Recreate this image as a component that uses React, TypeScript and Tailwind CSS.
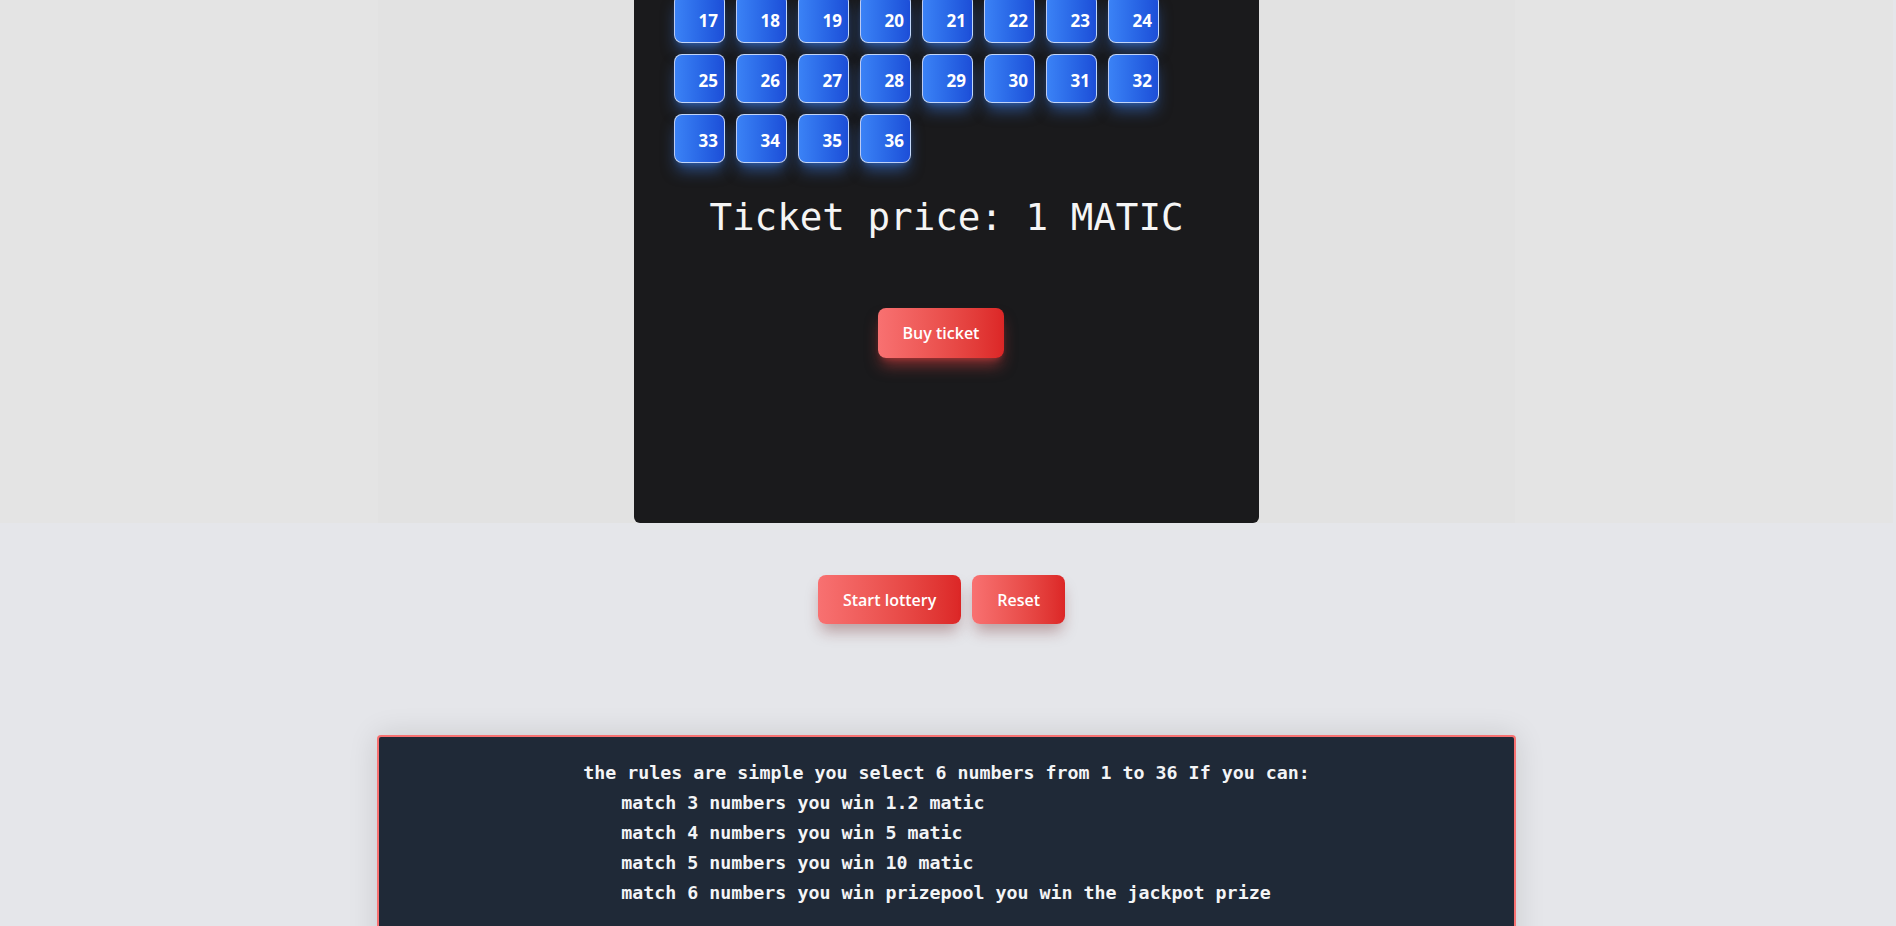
import React from "react";

const nums = Array.from({ length: 20 }, (_, i) => i + 17);

const rules = [
  "match 3 numbers you win 1.2 matic",
  "match 4 numbers you win 5 matic",
  "match 5 numbers you win 10 matic",
  "match 6 numbers you win prizepool you win the jackpot prize",
];

export default function App() {
  return (
    <div className="min-h-screen bg-[#e5e6ea] pb-[200px] pr-[3px] font-['Open_Sans',sans-serif]">
      <section className="flex justify-center bg-[#e4e4e4]">
        <div className="flex w-[1137px] justify-center bg-[#e2e2e2]">
          <div className="w-[625px] rounded-b-md bg-[#1a1a1c] pb-[165px] pl-[40px]">
            <div className="-mt-[6px] grid w-[485px] grid-cols-8 gap-[11px]">
              {nums.map((n) => (
                <button
                  key={n}
                  className="flex h-[49px] w-[51px] items-center justify-end rounded-lg border border-white/70 bg-gradient-to-r from-[#3b82f6] to-[#1d4ed8] pr-[6px] pt-[4px] text-[17px] font-bold text-white shadow-[0_10px_15px_-3px_rgba(59,130,246,0.5),0_4px_6px_-4px_rgba(59,130,246,0.5)]"
                >
                  {n}
                </button>
              ))}
            </div>
            <div className="-ml-[40px] mt-[35px] text-center font-['DejaVu_Sans_Mono',monospace] text-[37.5px] leading-[38px] text-[#f5f5f5]">
              Ticket price: 1 MATIC
            </div>
            <div className="-ml-[40px] mr-[11px] mt-[72px] flex justify-center">
              <button className="h-[50px] rounded-lg bg-gradient-to-r from-[#f87171] to-[#dc2626] px-[25px] text-[16px] font-semibold text-white shadow-[0_10px_15px_-3px_rgba(239,68,68,0.5),0_4px_6px_-4px_rgba(239,68,68,0.5)]">
                Buy ticket
              </button>
            </div>
          </div>
        </div>
      </section>

      <div className="mr-[10px] mt-[52px] flex justify-center gap-[11px]">
        <button className="h-[49px] rounded-lg bg-gradient-to-r from-[#f87171] to-[#dc2626] px-[25px] text-[16px] font-semibold text-white shadow-[0_10px_15px_-3px_rgba(100,20,20,0.35)]">
          Start lottery
        </button>
        <button className="h-[49px] rounded-lg bg-gradient-to-r from-[#f87171] to-[#dc2626] px-[25px] text-[16px] font-semibold text-white shadow-[0_10px_15px_-3px_rgba(100,20,20,0.35)]">
          Reset
        </button>
      </div>

      <div className="mx-auto mt-[111px] w-[1139px] rounded-t-sm border-2 border-[#f87171] bg-[#1f2937] pb-[60px] pt-[21px] shadow-[0_0_30px_rgba(0,0,0,0.12)]">
        <div className="flex justify-center">
          <div className="font-['DejaVu_Sans_Mono',monospace] text-[18.3px] font-bold leading-[30px] text-[#f3f4f6]">
            <div>the rules are simple you select 6 numbers from 1 to 36 If you can:</div>
            {rules.map((r) => (
              <div key={r} className="pl-[38px]">
                {r}
              </div>
            ))}
          </div>
        </div>
      </div>
    </div>
  );
}
